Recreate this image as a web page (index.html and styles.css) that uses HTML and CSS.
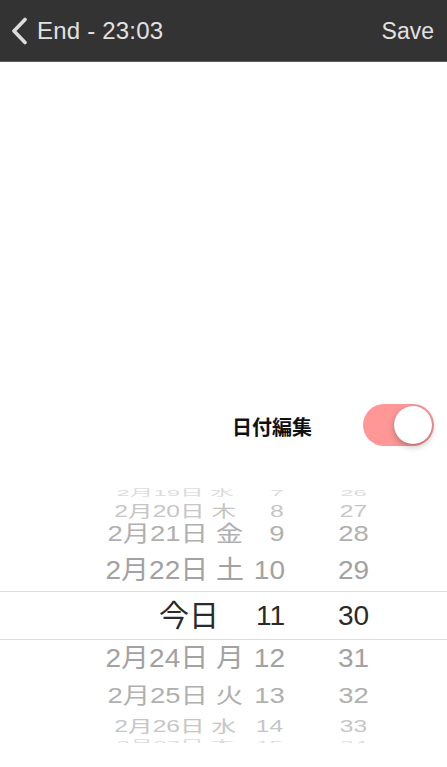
FILE: index.html
```html
<!DOCTYPE html>
<html lang="ja">
<head>
<meta charset="utf-8">
<title>End - 23:03</title>
<link rel="stylesheet" href="styles.css">
</head>
<body>
<div class="screen">
  <header class="navbar">
    <div class="nav-left">
      <svg class="chevron" width="18" height="28" viewBox="0 0 18 28">
        <polyline points="15,2.5 4,14 15,25.5" fill="none" stroke="#dcdcdc" stroke-width="3.6" stroke-linecap="round" stroke-linejoin="round"/>
      </svg>
      <span class="nav-title">End - 23:03</span>
    </div>
    <span class="nav-action">Save</span>
  </header>

  <main class="content">
    <div class="blank"></div>

    <div class="setting-row">
      <span class="setting-label">日付編集</span>
      <div class="toggle on"><div class="knob"></div></div>
    </div>

    <div class="picker">
      <div class="row r4 r4-top"><span class="c-date"><span class="t">2月19日 水</span></span><span class="c-hour"><span class="t">7</span></span><span class="c-min"><span class="t">26</span></span></div>
      <div class="row r3"><span class="c-date"><span class="t">2月20日 木</span></span><span class="c-hour"><span class="t">8</span></span><span class="c-min"><span class="t">27</span></span></div>
      <div class="row r2"><span class="c-date"><span class="t">2月21日 金</span></span><span class="c-hour"><span class="t">9</span></span><span class="c-min"><span class="t">28</span></span></div>
      <div class="row r1 r1-top"><span class="c-date"><span class="t">2月22日 土</span></span><span class="c-hour"><span class="t">10</span></span><span class="c-min"><span class="t">29</span></span></div>
      <div class="row sel"><span class="c-date"><span class="t today">今日</span></span><span class="c-hour"><span class="t">11</span></span><span class="c-min"><span class="t">30</span></span></div>
      <div class="row r1 r1-bot"><span class="c-date"><span class="t">2月24日 月</span></span><span class="c-hour"><span class="t">12</span></span><span class="c-min"><span class="t">31</span></span></div>
      <div class="row r2 r2-bot"><span class="c-date"><span class="t">2月25日 火</span></span><span class="c-hour"><span class="t">13</span></span><span class="c-min"><span class="t">32</span></span></div>
      <div class="row r3 r3-bot"><span class="c-date"><span class="t">2月26日 水</span></span><span class="c-hour"><span class="t">14</span></span><span class="c-min"><span class="t">33</span></span></div>
      <div class="row r4 r4-bot"><span class="c-date"><span class="t">2月27日 木</span></span><span class="c-hour"><span class="t">15</span></span><span class="c-min"><span class="t">34</span></span></div>
    </div>
  </main>
</div>
</body>
</html>
```

FILE: styles.css
```css
* { box-sizing: border-box; }

html, body {
  margin: 0;
  padding: 0;
  background: #ffffff;
}

body {
  font-family: "Liberation Sans", "Noto Sans CJK JP", sans-serif;
  color: #222;
}

.screen {
  width: 447px;
  height: 767px;
  overflow: hidden;
  display: flex;
  flex-direction: column;
}

/* Navbar */
.navbar {
  height: 62px;
  flex: none;
  background: #333333;
  border-bottom: 1px solid #5c5c5c;
  display: flex;
  align-items: center;
  justify-content: space-between;
  padding: 0 13px 0 10px;
  color: #e2e2e2;
}

.nav-left {
  display: flex;
  align-items: center;
  gap: 9px;
}

.chevron {
  display: block;
  margin-top: 1px;
}

.nav-title,
.nav-action {
  font-size: 24px;
  line-height: 1;
}

.nav-title { margin-top: 1px; letter-spacing: 0.2px; }
.nav-action { font-size: 23px; margin-top: 1px; }

/* Content */
.content {
  flex: 1;
  display: flex;
  flex-direction: column;
}

.blank {
  height: 341px;
  flex: none;
}

.setting-row {
  height: 43px;
  display: flex;
  align-items: center;
  justify-content: flex-end;
  padding-right: 13px;
  gap: 51px;
}

.setting-label {
  font-family: "Noto Sans CJK JP", sans-serif;
  font-weight: 700;
  font-size: 20px;
  color: #111;
  margin-top: 4px;
}

.toggle {
  width: 71px;
  height: 42px;
  border-radius: 21px;
  background: #ff9797;
  position: relative;
  flex: none;
}

.knob {
  position: absolute;
  top: 2px;
  right: 2px;
  width: 38px;
  height: 38px;
  border-radius: 50%;
  background: #ffffff;
  box-shadow: 0 3px 6px rgba(0, 0, 0, 0.25), 0 0 1px rgba(0, 0, 0, 0.2);
}

/* Picker wheel */
.picker {
  margin-top: 40px;
  height: 257px;
  overflow: hidden;
  display: flex;
  flex-direction: column;
}

.row {
  display: grid;
  grid-template-columns: 244px 41px 1fr;
  align-items: center;
  font-size: 28px;
  line-height: 1;
  flex: none;
}

.row > span {
  display: flex;
  align-items: center;
  height: 100%;
  white-space: nowrap;
}

.c-date { justify-content: flex-end; }
.c-hour { justify-content: flex-end; }
.c-min { justify-content: flex-start; padding-left: 53px; }

.t {
  display: inline-block;
  transform-origin: center center;
  line-height: 1;
}

.r4 { height: 12px; color: #dcdcdc; }
.r4 .t { transform: scale(0.85, 0.34); }
.r4-top .t { transform: translateY(-7px) scale(0.85, 0.34); }
.r4-bot .t { transform: translateY(-1px) scale(0.85, 0.34); }

.r3 { height: 19px; color: #c6c6c6; }
.r3 .t { transform: scale(0.88, 0.56); }
.r3-bot { height: 18px; }

.r2 { height: 33px; color: #b0b0b0; }
.r2 .t { transform: scale(0.98, 0.76); }
.r2-bot { height: 35px; }

.r1 { height: 41px; color: #a2a2a2; }
.r1 .t { transform: scale(1, 0.94); }
.r1-bot { height: 38px; }

.sel {
  height: 49px;
  border-top: 1px solid #dcdcdc;
  border-bottom: 1px solid #dcdcdc;
  color: #2a2a2a;
}

.today {
  margin-right: 25px;
  font-size: 30px;
}
```
